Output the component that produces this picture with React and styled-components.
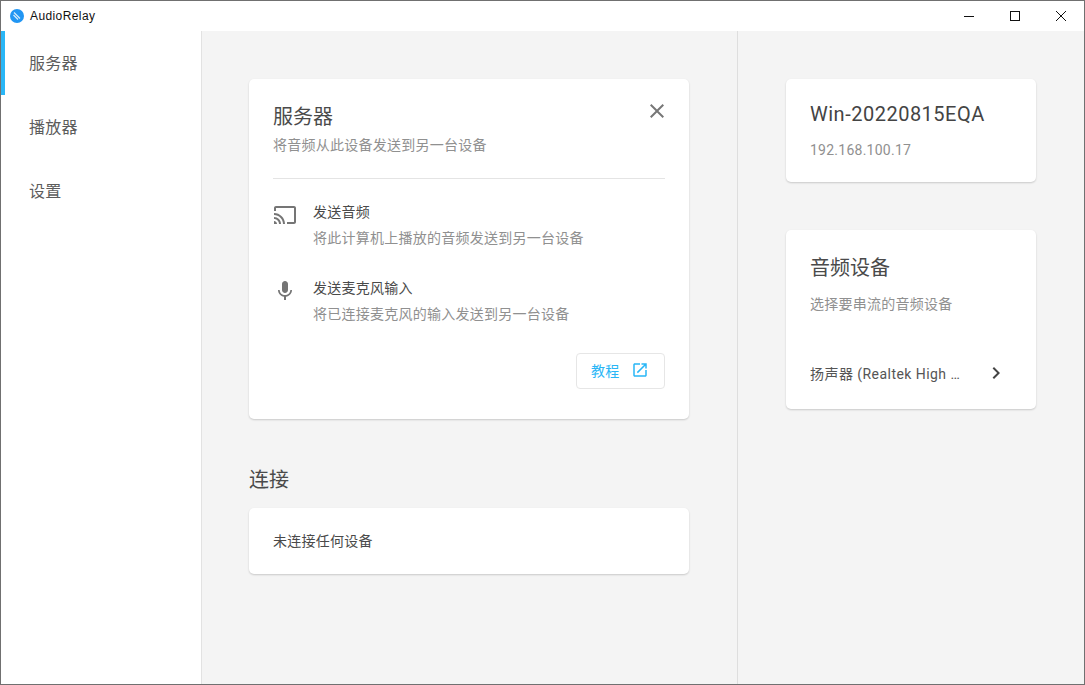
import React from "react";
import styled, { createGlobalStyle } from "styled-components";

const Global = createGlobalStyle`
  html, body { margin: 0; padding: 0; background: #fff; }
  * { box-sizing: border-box; }
  body { font-family: Roboto, "Noto Sans CJK SC", sans-serif; }
`;

const Win = styled.div`
  width: 1085px; height: 685px; border: 1px solid #707070;
  display: flex; flex-direction: column; overflow: hidden; background: #fff;
`;
const TitleBar = styled.header`
  height: 30px; flex: none; display: flex; align-items: center; padding-left: 9px; background: #fff;
`;
const AppName = styled.span`
  font: 12px "Liberation Sans", "Noto Sans CJK SC", sans-serif; color: #111; margin-left: 6px; flex: 1;
  letter-spacing: .4px;
`;
const WinButton = styled.button`
  width: 46px; height: 30px; border: 0; background: none; padding: 0;
  display: flex; align-items: center; justify-content: center; color: #111;
`;
const Body = styled.div`
  flex: 1; display: flex; min-height: 0;
`;
const Sidebar = styled.nav`
  width: 201px; flex: none; background: #fff; border-right: 1px solid #e2e2e2;
`;
const NavItem = styled.div`
  height: 64px; display: flex; align-items: center; padding: 0 0 2px ${p => (p.$active ? "24px" : "28px")};
  font-size: 16px; color: #5c5c5c; letter-spacing: .25px;
  border-left: ${p => (p.$active ? "4px solid #29b6f6" : "0")};
`;
const Main = styled.main`
  width: 536px; flex: none; background: #f4f4f4; border-right: 1px solid #dedede;
  padding: 48px 48px 0 47px; display: flex; flex-direction: column;
`;
const Side = styled.aside`
  flex: 1; background: #f4f4f4; padding: 48px 48px 0 48px; display: flex; flex-direction: column; gap: 48px;
`;
const Card = styled.section`
  background: #fff; border-radius: 5px; box-shadow: 0 1px 2px rgba(0,0,0,.18);
  padding: 24px; height: ${p => p.$h}px; flex: none;
`;
const CardHead = styled.div`
  display: flex; justify-content: space-between; align-items: flex-start;
  height: 76px; border-bottom: 1px solid #e4e4e4;
`;
const CardTitle = styled.h2`
  margin: 0; font-size: 20px; font-weight: 400; color: #4a4a4a; line-height: 28px;
`;
const Sub = styled.p`
  margin: ${p => p.$mt}px 0 0; font-size: 14px; line-height: 20px; color: #909090; letter-spacing: .25px;
`;
const CloseBtn = styled.button`
  border: 0; background: none; padding: 0; width: 24px; height: 24px; color: #777; margin: -4px -4px 0 0;
`;
const Option = styled.div`
  display: flex; gap: 16px; height: 76px;
`;
const OptionList = styled.div`
  padding-top: 20px;
`;
const OptionIcon = styled.div`
  width: 24px; height: 24px; flex: none; color: #757575; margin-top: 4px;
`;
const OptionTitle = styled.div`
  font-size: 14px; line-height: 26px; color: #4a4a4a; letter-spacing: .25px;
`;
const OptionDesc = styled.div`
  font-size: 14px; line-height: 26px; color: #909090; letter-spacing: .25px;
`;
const Actions = styled.div`
  display: flex; justify-content: flex-end; margin-top: 2px;
`;
const LinkBtn = styled.button`
  width: 89px; height: 36px; border: 1px solid #e6e6e6; border-radius: 4px; background: #fff;
  color: #29b6f6; font: 14px Roboto, "Noto Sans CJK SC", sans-serif; letter-spacing: .25px;
  padding: 0 15px 2px 14px; display: flex; align-items: center; justify-content: space-between;
`;
const SectionTitle = styled.h3`
  margin: 45px 0 12px; font-size: 20px; line-height: 32px; font-weight: 400; color: #4a4a4a; flex: none;
`;
const Empty = styled.div`
  font-size: 14px; line-height: 18px; color: #4a4a4a; letter-spacing: .25px;
`;
const HostName = styled.div`
  font-size: 20px; line-height: 28px; color: #444; margin-top: -3px; letter-spacing: .5px;
`;
const Device = styled.div`
  display: flex; align-items: center; justify-content: space-between; margin-top: 47px;
  font-size: 14px; color: #555; height: 24px; margin-right: 4px; letter-spacing: .45px;
`;
const DeviceName = styled.span`
  width: 154px; white-space: nowrap; overflow: hidden; text-overflow: ellipsis; margin-top: -1px;
`;
const Chevron = styled.span`
  width: 24px; height: 24px; color: #444; display: block;
`;

const Ico = ({ d, size = 24 }) => (
  <svg width={size} height={size} viewBox="0 0 24 24" fill="currentColor"><path d={d} /></svg>
);

const P = {
  cast: "M21 3H3c-1.1 0-2 .9-2 2v3h2V5h18v14h-7v2h7c1.1 0 2-.9 2-2V5c0-1.1-.9-2-2-2zM1 18v3h3c0-1.66-1.34-3-3-3zm0-4v2c2.76 0 5 2.24 5 5h2c0-3.87-3.13-7-7-7zm0-4v2c4.97 0 9 4.03 9 9h2c0-6.08-4.93-11-11-11z",
  mic: "M12 14c1.66 0 2.99-1.34 2.99-3L15 5c0-1.66-1.34-3-3-3S9 3.34 9 5v6c0 1.66 1.34 3 3 3zm5.3-3c0 3-2.54 5.1-5.3 5.1S6.7 14 6.7 11H5c0 3.41 2.72 6.23 6 6.72V21h2v-3.28c3.28-.48 6-3.3 6-6.72h-1.7z",
  open: "M19 19H5V5h7V3H5c-1.11 0-2 .9-2 2v14c0 1.1.89 2 2 2h14c1.1 0 2-.9 2-2v-7h-2v7zM14 3v2h3.59l-9.83 9.83 1.41 1.41L19 6.41V10h2V3h-7z",
  chevron: "M10 6L8.59 7.41 13.17 12l-4.58 4.59L10 18l6-6z",
  close: "M19 6.41L17.59 5 12 10.59 6.41 5 5 6.41 10.59 12 5 17.59 6.41 19 12 13.41 17.59 19 19 17.59 13.41 12z",
};

const Logo = () => (
  <svg width="14" height="14" viewBox="0 0 14 14">
    <circle cx="7" cy="7" r="7" fill="#2196f3" />
    <path d="M4 3.5 10 9.5M3.5 6 8 10.5" stroke="#d5ecfc" strokeWidth="1.2" fill="none" />
  </svg>
);

export default function App() {
  return (
    <Win>
      <Global />
      <TitleBar>
        <Logo />
        <AppName>AudioRelay</AppName>
        <WinButton><svg width="10" height="10"><path d="M0 5.5H10" stroke="currentColor" /></svg></WinButton>
        <WinButton><svg width="10" height="10"><rect x=".5" y=".5" width="9" height="9" fill="none" stroke="currentColor" /></svg></WinButton>
        <WinButton><svg width="10" height="10"><path d="M0 0 10 10M10 0 0 10" stroke="currentColor" /></svg></WinButton>
      </TitleBar>
      <Body>
        <Sidebar>
          <NavItem $active>服务器</NavItem>
          <NavItem>播放器</NavItem>
          <NavItem>设置</NavItem>
        </Sidebar>
        <Main>
          <Card $h={340}>
            <CardHead>
              <div>
                <CardTitle>服务器</CardTitle>
                <Sub $mt={4}>将音频从此设备发送到另一台设备</Sub>
              </div>
              <CloseBtn aria-label="关闭"><Ico d={P.close} /></CloseBtn>
            </CardHead>
            <OptionList>
              <Option>
                <OptionIcon><Ico d={P.cast} /></OptionIcon>
                <div>
                  <OptionTitle>发送音频</OptionTitle>
                  <OptionDesc>将此计算机上播放的音频发送到另一台设备</OptionDesc>
                </div>
              </Option>
              <Option>
                <OptionIcon><Ico d={P.mic} /></OptionIcon>
                <div>
                  <OptionTitle>发送麦克风输入</OptionTitle>
                  <OptionDesc>将已连接麦克风的输入发送到另一台设备</OptionDesc>
                </div>
              </Option>
            </OptionList>
            <Actions>
              <LinkBtn>教程<Ico d={P.open} size={18} /></LinkBtn>
            </Actions>
          </Card>
          <SectionTitle>连接</SectionTitle>
          <Card $h={66}>
            <Empty>未连接任何设备</Empty>
          </Card>
        </Main>
        <Side>
          <Card $h={103}>
            <HostName>Win-20220815EQA</HostName>
            <Sub $mt={12}>192.168.100.17</Sub>
          </Card>
          <Card $h={179}>
            <CardTitle>音频设备</CardTitle>
            <Sub $mt={12}>选择要串流的音频设备</Sub>
            <Device>
              <DeviceName>扬声器 (Realtek High Definition Audio)</DeviceName>
              <Chevron><Ico d={P.chevron} /></Chevron>
            </Device>
          </Card>
        </Side>
      </Body>
    </Win>
  );
}
